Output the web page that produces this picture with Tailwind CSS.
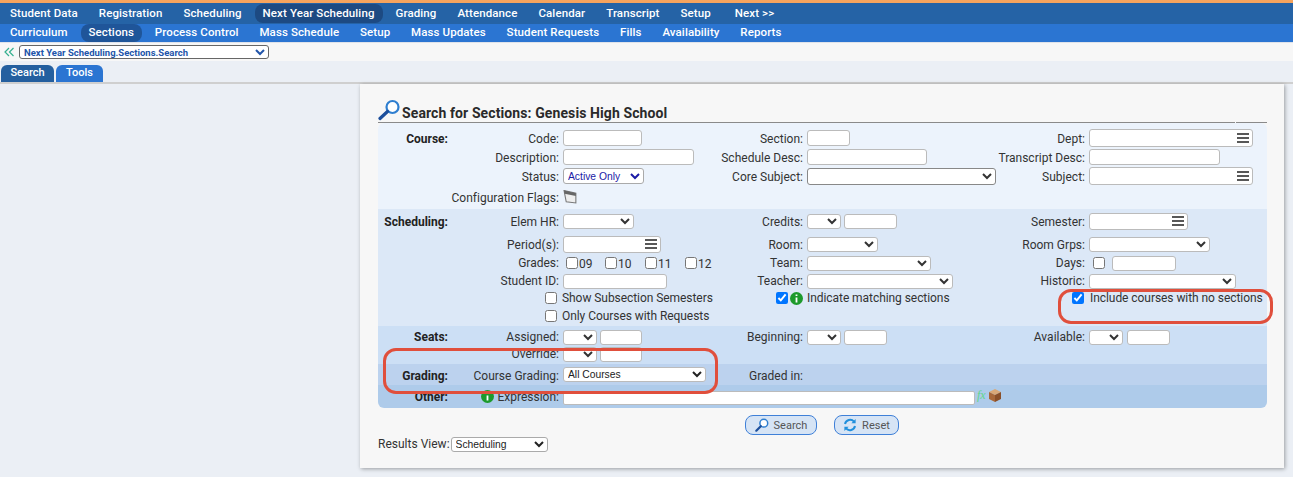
<!DOCTYPE html>
<html lang="en">
<head>
<meta charset="utf-8">
<script src="https://cdn.jsdelivr.net/npm/@tailwindcss/browser@4"></script>
<title>Search for Sections</title>
</head>
<body class="relative w-[1293px] h-[477px] overflow-hidden bg-[#ebeff5] font-['Roboto',sans-serif] text-[12px] leading-none text-[#333] tracking-[0.01px]">
<div class="h-[3px] bg-[#f6a45e]"></div>
<nav class="h-[21px] bg-[#2563a6] flex items-center pl-[2px] gap-[5px] text-white font-medium text-[11.5px] tracking-[0.1px]">
  <span class="px-[8px]">Student Data</span>
  <span class="px-[8px]">Registration</span>
  <span class="px-[8px]">Scheduling</span>
  <span class="px-[8px] py-[4px] rounded-[8px] bg-[#1d4a82]">Next Year Scheduling</span>
  <span class="px-[8px]">Grading</span>
  <span class="px-[8px]">Attendance</span>
  <span class="px-[8px]">Calendar</span>
  <span class="px-[8px]">Transcript</span>
  <span class="px-[8px]">Setup</span>
  <span class="px-[8px] ml-[3px]">Next &gt;&gt;</span>
</nav>
<nav class="h-[18px] bg-[#2b75d2] flex items-center pl-[2px] gap-[4.8px] text-white font-medium text-[11.5px] tracking-[0.1px]">
  <span class="px-[8px]">Curriculum</span>
  <span class="px-[8px] py-[3px] rounded-[8px] bg-[#1f5599]">Sections</span>
  <span class="px-[8px]">Process Control</span>
  <span class="px-[8px]">Mass Schedule</span>
  <span class="px-[8px]">Setup</span>
  <span class="px-[8px]">Mass Updates</span>
  <span class="px-[8px]">Student Requests</span>
  <span class="px-[8px]">Fills</span>
  <span class="px-[8px]">Availability</span>
  <span class="px-[8px]">Reports</span>
</nav>
<div class="h-[19px] bg-[#f7f7f7] flex items-center pl-[4px] border-t border-[#dfe3ea]">
  <svg class="w-[15px] h-[10px] shrink-0" viewBox="0 0 15 10"><path d="M5 1 1 5l4 4M9.500 1l-4 4 4 4" fill="none" stroke="#35b08f" stroke-width="1.2"/></svg>
  <select aria-label="Location" class="w-[250px] h-[14px] bg-white border border-[#666] rounded-[3px] text-[9.5px] font-bold text-[#2255aa] tracking-normal"><option>Next Year Scheduling.Sections.Search</option></select>
</div>
<div class="h-[23px] bg-[#ebeff5] border-b-2 border-[#cfcfcf] flex items-end pl-[1px] gap-[2px] text-white font-medium text-[11px]">
  <span class="w-[53px] h-[17px] pb-[2px] flex items-center justify-center rounded-t-[6px] bg-[#245f9f]">Search</span>
  <span class="w-[47px] h-[17px] pb-[2px] flex items-center justify-center rounded-t-[6px] bg-[#2b75d2]">Tools</span>
</div>

<main class="ml-[360px] mt-0 w-[924px] h-[384px] bg-[#f7f7f7] shadow-[1px_1px_4px_rgba(0,0,0,0.35)] pl-[18px] pr-[17px] pt-[18px]">
  <div class="h-[21px] flex items-center border-b border-[#8a8a8a]">
    <svg class="w-[24px] h-[22px] -mt-[5px] shrink-0" viewBox="0 0 24 22"><circle cx="14.500" cy="8" r="6" fill="#fff" stroke="#2f7fd0" stroke-width="2.200"/><path d="M9.500 12.500 2 19.500" stroke="#1d4f9c" stroke-width="3.200" stroke-linecap="round"/></svg>
    <h1 class="text-[14px] pt-[2px] font-bold text-[#2a2a2a] tracking-[0.1px]">Search for Sections: Genesis High School</h1>
  </div>

  <div class="bg-[#ecf3fc] pt-[5px] rounded-t-[6px]">
    <div class="grid grid-cols-[70px_111px_156px_88px_195px_87px_182px] h-[20px] items-center">
      <b class="text-right pt-[2px] font-bold text-[#222]">Course:</b>
      <span class="text-right pt-[2px]">Code:</span>
      <span class="pl-[4px] flex"><input aria-label="Code" class="w-[79px] h-[16px] bg-white border border-[#bbb] rounded-[3px]"></span>
      <span class="text-right pt-[2px]">Section:</span>
      <span class="pl-[4px] flex"><input aria-label="Section" class="w-[43px] h-[16px] bg-white border border-[#bbb] rounded-[3px]"></span>
      <span class="text-right pt-[2px]">Dept:</span>
      <span class="pl-[4px] flex"><span class="relative w-[164px] h-[18px] bg-white border border-[#bbb] rounded-[3px] flex items-center justify-end pr-[2px]"><svg class="w-[14px] h-[12px]" viewBox="0 0 14 12"><path d="M1 2h12M1 6h12M1 10h12" stroke="#222" stroke-width="1.700"/></svg></span></span>
    </div>
    <div class="grid grid-cols-[70px_111px_156px_88px_195px_87px_182px] h-[18px] items-center">
      <span></span>
      <span class="text-right pt-[2px]">Description:</span>
      <span class="pl-[4px] flex"><input aria-label="Description" class="w-[131px] h-[16px] bg-white border border-[#bbb] rounded-[3px]"></span>
      <span class="text-right pt-[2px] whitespace-nowrap">Schedule Desc:</span>
      <span class="pl-[4px] flex"><input aria-label="Schedule Desc" class="w-[120px] h-[16px] bg-white border border-[#bbb] rounded-[3px]"></span>
      <span class="text-right pt-[2px] whitespace-nowrap">Transcript Desc:</span>
      <span class="pl-[4px] flex"><input aria-label="Transcript Desc" class="w-[131px] h-[16px] bg-white border border-[#bbb] rounded-[3px]"></span>
    </div>
    <div class="grid grid-cols-[70px_111px_156px_88px_195px_87px_182px] h-[20px] items-center">
      <span></span>
      <span class="text-right pt-[2px]">Status:</span>
      <span class="pl-[4px] flex"><select aria-label="Status" class="w-[81px] h-[16px] bg-white border border-[#aaa] rounded-[3px] text-[10.3px] text-[#1a1aa6] font-['Liberation_Sans',sans-serif] tracking-normal"><option>Active Only</option></select></span>
      <span class="text-right pt-[2px] whitespace-nowrap">Core Subject:</span>
      <span class="pl-[4px] flex"><select aria-label="Core Subject" class="w-[189px] h-[17px] bg-white border border-[#888] rounded-[3px]"><option></option></select></span>
      <span class="text-right pt-[2px]">Subject:</span>
      <span class="pl-[4px] flex"><span class="w-[164px] h-[18px] bg-white border border-[#bbb] rounded-[3px] flex items-center justify-end pr-[2px]"><svg class="w-[14px] h-[12px]" viewBox="0 0 14 12"><path d="M1 2h12M1 6h12M1 10h12" stroke="#222" stroke-width="1.700"/></svg></span></span>
    </div>
    <div class="grid grid-cols-[70px_111px_156px_88px_195px_87px_182px] h-[23px] items-center">
      <span></span>
      <span class="text-right whitespace-nowrap">Configuration Flags:</span>
      <span class="pl-[4px] flex"><svg class="w-[15px] h-[15px] -mt-[3px]" viewBox="0 0 14 14"><path d="M1 1.500 12 4v9L3 12Z" fill="#eee" stroke="#777"/><path d="M1 1.500 12 4v2.500L1.500 4.500Z" fill="#666"/></svg></span>
    </div>
  </div>

  <div class="bg-[#dce8f7]">
    <div class="grid grid-cols-[70px_111px_156px_88px_195px_87px_182px] h-[24px] items-center">
      <b class="text-right pt-[2px] font-bold text-[#222]">Scheduling:</b>
      <span class="text-right pt-[2px]">Elem HR:</span>
      <span class="pl-[4px] flex"><select aria-label="Elem HR" class="w-[71px] h-[15px] bg-white border border-[#bbb] rounded-[3px]"><option></option></select></span>
      <span class="text-right pt-[2px]">Credits:</span>
      <span class="pl-[4px] flex gap-[3px]"><select aria-label="Credits" class="w-[34px] h-[15px] bg-white border border-[#bbb] rounded-[3px]"><option></option></select><input aria-label="Credits value" class="w-[53px] h-[15px] bg-white border border-[#bbb] rounded-[3px]"></span>
      <span class="text-right pt-[2px]">Semester:</span>
      <span class="pl-[4px] flex"><span class="w-[99px] h-[17px] bg-white border border-[#bbb] rounded-[3px] flex items-center justify-end pr-[2px]"><svg class="w-[14px] h-[12px]" viewBox="0 0 14 12"><path d="M1 2h12M1 6h12M1 10h12" stroke="#222" stroke-width="1.700"/></svg></span></span>
    </div>
    <div class="grid grid-cols-[70px_111px_156px_88px_195px_87px_182px] h-[22px] items-center">
      <span></span>
      <span class="text-right pt-[2px]">Period(s):</span>
      <span class="pl-[4px] flex"><span class="w-[98px] h-[17px] bg-white border border-[#bbb] rounded-[3px] flex items-center justify-end pr-[2px]"><svg class="w-[14px] h-[12px]" viewBox="0 0 14 12"><path d="M1 2h12M1 6h12M1 10h12" stroke="#222" stroke-width="1.700"/></svg></span></span>
      <span class="text-right pt-[2px]">Room:</span>
      <span class="pl-[4px] flex"><select aria-label="Room" class="w-[71px] h-[15px] bg-white border border-[#bbb] rounded-[3px]"><option></option></select></span>
      <span class="text-right pt-[2px] whitespace-nowrap">Room Grps:</span>
      <span class="pl-[4px] flex"><select aria-label="Room Grps" class="w-[121px] h-[15px] bg-white border border-[#bbb] rounded-[3px]"><option></option></select></span>
    </div>
    <div class="grid grid-cols-[70px_111px_156px_88px_195px_87px_182px] h-[16px] items-center">
      <span></span>
      <span class="text-right">Grades:</span>
      <span class="pl-[7px] flex items-center">
        <input aria-label="09" type="checkbox" class="w-[12px] h-[12px] m-0"><span class="w-[27px] pl-[1px] pt-[2px]">09</span>
        <input aria-label="10" type="checkbox" class="w-[12px] h-[12px] m-0"><span class="w-[28px] pl-[1px] pt-[2px]">10</span>
        <input aria-label="11" type="checkbox" class="w-[12px] h-[12px] m-0"><span class="w-[28px] pl-[1px] pt-[2px]">11</span>
        <input aria-label="12" type="checkbox" class="w-[12px] h-[12px] m-0"><span class="pl-[1px] pt-[2px]">12</span>
      </span>
      <span class="text-right">Team:</span>
      <span class="pl-[4px] flex"><select aria-label="Team" class="w-[124px] h-[15px] bg-white border border-[#bbb] rounded-[3px]"><option></option></select></span>
      <span class="text-right">Days:</span>
      <span class="pl-[8px] flex items-center gap-[7px]"><input aria-label="Days" type="checkbox" class="w-[12px] h-[12px] m-0"><input aria-label="Days value" class="w-[64px] h-[15px] bg-white border border-[#bbb] rounded-[3px]"></span>
    </div>
    <div class="grid grid-cols-[70px_111px_156px_88px_195px_87px_182px] h-[20px] items-center">
      <span></span>
      <span class="text-right whitespace-nowrap">Student ID:</span>
      <span class="pl-[4px] flex"><input aria-label="Student ID" class="w-[104px] h-[15px] bg-white border border-[#bbb] rounded-[3px]"></span>
      <span class="text-right">Teacher:</span>
      <span class="pl-[4px] flex"><select aria-label="Teacher" class="w-[146px] h-[15px] bg-white border border-[#bbb] rounded-[3px]"><option></option></select></span>
      <span class="text-right">Historic:</span>
      <span class="pl-[4px] flex"><select aria-label="Historic" class="w-[147px] h-[15px] bg-white border border-[#bbb] rounded-[3px]"><option></option></select></span>
    </div>
    <div class="grid grid-cols-[70px_111px_156px_88px_195px_87px_182px] h-[14px] items-center tracking-[-0.06px]">
      <span></span>
      <label class="col-span-2 pl-[97px] flex items-center gap-[5px] whitespace-nowrap"><input type="checkbox" class="w-[12px] h-[12px] m-0">Show Subsection Semesters</label>
      <span class="flex items-center justify-end gap-[2px]"><input aria-label="Indicate" type="checkbox" checked class="w-[12px] h-[12px] m-0"><svg class="w-[13px] h-[13px]" viewBox="0 0 13 13"><circle cx="6.500" cy="6.500" r="6.500" fill="#1d9a2c"/><path d="M6.500 2.400v1.600M6.500 5.400v5" stroke="#fff" stroke-width="1.800"/></svg></span>
      <span class="pl-[4px] whitespace-nowrap">Indicate matching sections</span>
      <span class="flex items-center justify-end pr-[1px]"><input aria-label="Include" type="checkbox" checked class="w-[12px] h-[12px] m-0"></span>
      <span class="pl-[5px] whitespace-nowrap">Include courses with no sections</span>
    </div>
    <div class="grid grid-cols-[70px_111px_156px_88px_195px_87px_182px] h-[21px] items-center tracking-[-0.06px]">
      <span></span>
      <label class="col-span-2 pl-[97px] flex items-center gap-[5px] whitespace-nowrap"><input type="checkbox" class="w-[12px] h-[12px] m-0">Only Courses with Requests</label>
    </div>
  </div>

  <div class="bg-[#ccdff5]">
    <div class="grid grid-cols-[70px_111px_156px_88px_195px_87px_182px] h-[22px] items-center">
      <b class="text-right font-bold text-[#222]">Seats:</b>
      <span class="text-right">Assigned:</span>
      <span class="pl-[4px] flex gap-[3px]"><select aria-label="Assigned" class="w-[34px] h-[15px] bg-white border border-[#bbb] rounded-[3px]"><option></option></select><input aria-label="Assigned value" class="w-[42px] h-[15px] bg-white border border-[#bbb] rounded-[3px]"></span>
      <span class="text-right">Beginning:</span>
      <span class="pl-[4px] flex gap-[3px]"><select aria-label="Beginning" class="w-[34px] h-[15px] bg-white border border-[#bbb] rounded-[3px]"><option></option></select><input aria-label="Beginning value" class="w-[43px] h-[15px] bg-white border border-[#bbb] rounded-[3px]"></span>
      <span class="text-right">Available:</span>
      <span class="pl-[4px] flex gap-[4px]"><select aria-label="Available" class="w-[34px] h-[15px] bg-white border border-[#bbb] rounded-[3px]"><option></option></select><input aria-label="Available value" class="w-[43px] h-[15px] bg-white border border-[#bbb] rounded-[3px]"></span>
    </div>
    <div class="grid grid-cols-[70px_111px_156px_88px_195px_87px_182px] h-[16px] items-start">
      <span></span>
      <span class="text-right">Override:</span>
      <span class="pl-[4px] flex gap-[3px] -mt-[1px]"><select aria-label="Override" class="w-[34px] h-[15px] bg-white border border-[#bbb] rounded-[3px]"><option></option></select><input aria-label="Override value" class="w-[42px] h-[15px] bg-white border border-[#bbb] rounded-[3px]"></span>
    </div>
  </div>

  <div class="bg-[#bcd2ee]">
    <div class="grid grid-cols-[70px_111px_156px_88px_195px_87px_182px] h-[21px] items-center">
      <b class="text-right pt-[2px] font-bold text-[#222]">Grading:</b>
      <span class="text-right pt-[2px] whitespace-nowrap">Course Grading:</span>
      <span class="pl-[4px] flex"><select aria-label="Course Grading" class="w-[143px] h-[15px] -mt-[1px] bg-white border border-[#bbb] rounded-[3px] text-[10.3px] text-[#222] font-['Liberation_Sans',sans-serif] tracking-normal"><option>All Courses</option></select></span>
      <span class="text-right pt-[2px] whitespace-nowrap">Graded in:</span>
    </div>
  </div>

  <div class="bg-[#aecbea] rounded-b-[6px]">
    <div class="grid grid-cols-[70px_111px_156px_88px_195px_87px_182px] h-[23px] items-center">
      <b class="text-right font-bold text-[#222]">Other:</b>
      <span class="flex items-center justify-end gap-[3px]"><svg class="w-[13px] h-[13px]" viewBox="0 0 13 13"><circle cx="6.500" cy="6.500" r="6.500" fill="#1d9a2c"/><path d="M6.500 2.400v1.600M6.500 5.400v5" stroke="#fff" stroke-width="1.800"/></svg>Expression:</span>
      <span class="col-span-5 pl-[4px] flex items-center">
        <input aria-label="Expression" class="w-[412px] h-[14px] mt-[3px] bg-white border border-[#bbb] rounded-[2px]">
        <span class="ml-[2px] w-[11px] italic text-[12px] text-[#5fd68a] font-['Liberation_Serif',serif] tracking-normal -mt-[3px]">fx</span>
        <svg class="w-[14px] h-[15px] -mt-[3px]" viewBox="0 0 14 15"><path d="M7 1 13 4 7 7 1 4Z" fill="#d9a878"/><path d="M1 4 7 7v7L1 11Z" fill="#a8683a"/><path d="M13 4 7 7v7l6-3Z" fill="#8a4f28"/></svg>
      </span>
    </div>
  </div>

  <div class="flex items-center gap-[17px] mt-[7px] ml-[367px] h-[20px]">
    <span class="w-[72px] h-[20px] flex items-center justify-center gap-[5px] bg-[#d6e4f5] border border-[#3f80d8] rounded-[8px] text-[11px] text-[#555]">
      <svg class="w-[14px] h-[14px]" viewBox="0 0 14 14"><circle cx="8.800" cy="5.200" r="3.900" fill="#fff" stroke="#2f7fd0" stroke-width="1.500"/><path d="M5.800 8.200 1.300 12.700" stroke="#1d4f9c" stroke-width="2.200" stroke-linecap="round"/></svg>Search</span>
    <span class="w-[65px] h-[20px] flex items-center justify-center gap-[5px] bg-[#d6e4f5] border border-[#3f80d8] rounded-[8px] text-[11px] text-[#555]">
      <svg class="w-[14px] h-[14px]" viewBox="0 0 14 14"><path d="M2 6A5.200 5.200 0 0 1 11 3.600" fill="none" stroke="#1f8fdc" stroke-width="2"/><path d="M12.600 1v4.200H8.400Z" fill="#1f8fdc"/><path d="M12 8A5.200 5.200 0 0 1 3 10.400" fill="none" stroke="#1f8fdc" stroke-width="2"/><path d="M1.400 13V8.800h4.200Z" fill="#1f8fdc"/></svg>Reset</span>
  </div>

  <div class="flex items-center mt-[2px] h-[14px]">
    <span class="whitespace-nowrap">Results View:</span>
    <select aria-label="Results View" class="w-[97px] h-[15px] ml-[1px] bg-white border border-[#aaa] rounded-[3px] text-[10.3px] text-[#222] font-['Liberation_Sans',sans-serif] tracking-normal"><option>Scheduling</option></select>
  </div>
</main>

<div class="absolute left-[1235px] top-[122px] w-[1px] h-[1px] bg-[#f7f7f7]"></div>
<div class="absolute left-[383px] top-[348px] w-[335px] h-[46px] border-[3px] border-[#e04f3c] rounded-[13px]"></div>
<div class="absolute left-[1058px] top-[289px] w-[215px] h-[35px] border-[3px] border-[#e04f3c] rounded-[13px]"></div>
</body>
</html>
